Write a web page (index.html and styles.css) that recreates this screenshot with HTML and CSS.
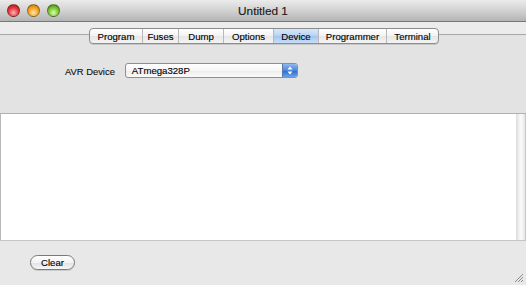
FILE: index.html
```html
<!DOCTYPE html>
<html>
<head>
<meta charset="utf-8">
<link rel="stylesheet" href="styles.css">
</head>
<body>
<div class="window">
  <div class="titlebar">
    <div class="lights">
      <span class="light red"></span>
      <span class="light yellow"></span>
      <span class="light green"></span>
    </div>
    <div class="title">Untitled 1</div>
    <div></div>
  </div>
  <div class="tabarea">
    <div class="tabline"></div>
    <div class="tabs">
      <span class="tab first">Program</span>
      <span class="tab">Fuses</span>
      <span class="tab">Dump</span>
      <span class="tab">Options</span>
      <span class="tab selected">Device</span>
      <span class="tab">Programmer</span>
      <span class="tab last">Terminal</span>
    </div>
  </div>
  <div class="panel">
    <span class="label">AVR Device</span>
    <div class="popup">
      <span class="popup-text">ATmega328P</span>
      <span class="stepper">
        <svg width="6" height="9" viewBox="0 0 6 9"><path d="M3 0.5 L5.5 3.5 L0.5 3.5 Z M3 8.5 L5.5 5.5 L0.5 5.5 Z" fill="#fff"/></svg>
      </span>
    </div>
  </div>
  <div class="output">
    <div class="text"></div>
    <div class="scrolltrack"></div>
  </div>
  <div class="footer">
    <span class="button">Clear</span>
  </div>
  <svg class="grip" width="10" height="10" viewBox="0 0 10 10">
    <path d="M9 1 L1 9 M9 4 L4 9 M9 7 L7 9" stroke="#8a8a8a" stroke-width="1"/>
  </svg>
</div>
</body>
</html>
```
FILE: styles.css
```css
html, body {
  margin: 0;
  padding: 0;
}
body {
  width: 526px;
  height: 285px;
  overflow: hidden;
  font-family: "Liberation Sans", Arial, sans-serif;
}
.window {
  position: relative;
  width: 526px;
  height: 285px;
  display: flex;
  flex-direction: column;
  background: #e8e8e8;
}
.titlebar {
  height: 21px;
  border-bottom: 1px solid #777;
  background: linear-gradient(#ebebeb, #d2d2d2 50%, #b4b4b4);
  display: grid;
  grid-template-columns: 1fr auto 1fr;
  align-items: center;
}
.lights {
  display: flex;
  gap: 7px;
  padding-left: 7px;
  align-items: center;
}
.light {
  width: 13px;
  height: 13px;
  border-radius: 50%;
  box-sizing: border-box;
  border: 1px solid rgba(0,0,0,0.35);
}
.red { background: radial-gradient(circle at 50% 70%, #ffb0b0, #e0333a 55%, #a81a20); }
.yellow { background: radial-gradient(circle at 50% 70%, #ffe6a0, #f0a020 55%, #b46a08); }
.green { background: radial-gradient(circle at 50% 70%, #d8ffb0, #78c030 55%, #3e8010); }
.title {
  font-size: 11.8px;
  color: #1a1a1a;
  -webkit-text-stroke: 0.15px #1a1a1a;
  padding-top: 1px;
}
.tabarea {
  height: 21px;
  display: flex;
  justify-content: center;
  align-items: flex-start;
  background: linear-gradient(#ececec 0, #ececec 13px, #e3e3e3 13px);
  position: relative;
}
.tabline {
  position: absolute;
  left: 0;
  right: 0;
  top: 12px;
  height: 1px;
  background: #a8a8a8;
}
.tabs {
  margin-top: 6px;
  margin-left: 2px;
  display: flex;
  height: 14px;
  border: 1px solid #8c8c8c;
  border-radius: 4px;
  background: linear-gradient(#ffffff, #f2f2f2 50%, #e6e6e6 51%, #f4f4f4);
  position: relative;
  box-shadow: 0 1px 0 rgba(0,0,0,0.12);
  overflow: hidden;
}
.tab {
  display: flex;
  align-items: center;
  justify-content: center;
  font-size: 9.6px;
  color: #000;
  -webkit-text-stroke: 0.12px #000;
  border-left: 1px solid #b8b8b8;
  box-sizing: border-box;
}
.tab.first { border-left: none; width: 52px; }
.tab:nth-child(2) { width: 36px; }
.tab:nth-child(3) { width: 45px; }
.tab:nth-child(4) { width: 50px; }
.tab:nth-child(5) { width: 45px; }
.tab:nth-child(6) { width: 68px; }
.tab.last { width: 52px; }
.tab.selected {
  background: linear-gradient(#d8e8fa, #b8d2f2 50%, #a4c4ee 51%, #c8def8);
}
.panel {
  height: 70px;
  background: #e3e3e3;
  display: flex;
  align-items: flex-start;
  padding-top: 20px;
  padding-left: 65px;
  box-sizing: border-box;
  gap: 10px;
}
.label {
  font-size: 9.4px;
  margin-top: 3px;
  color: #111;
  -webkit-text-stroke: 0.12px #111;
}
.popup {
  width: 173px;
  height: 15px;
  box-sizing: border-box;
  border: 1px solid #8e8e8e;
  border-radius: 3px;
  background: linear-gradient(#ffffff, #f6f6f6 50%, #ececec 51%, #fafafa);
  display: flex;
  align-items: center;
  overflow: hidden;
}
.popup-text {
  flex: 1;
  font-size: 9.6px;
  padding-left: 6px;
  color: #000;
  -webkit-text-stroke: 0.12px #000;
}
.stepper {
  width: 14px;
  height: 13px;
  border-left: 1px solid #5a7aa8;
  background: linear-gradient(#8fb8ee, #4a86dc 50%, #2a68c8 51%, #6aa4ec);
  display: flex;
  align-items: center;
  justify-content: center;
}
.output {
  height: 128px;
  border-top: 1px solid #b0b0b0;
  border-bottom: 1px solid #c4c4c4;
  display: flex;
  box-sizing: border-box;
  background: #fff;
}
.text {
  flex: 1;
  border-left: 1px solid #b8b8b8;
  background: #fff;
}
.scrolltrack {
  width: 9px;
  border-right: 1px solid #c8c8c8;
  background: linear-gradient(90deg, #dcdcdc, #f4f4f4 40%, #fafafa 60%, #e4e4e4);
}
.footer {
  flex: 1;
  background: #e8e8e8;
  padding-left: 30px;
  padding-top: 14px;
  box-sizing: border-box;
  display: flex;
  align-items: flex-start;
}
.button {
  display: flex;
  align-items: center;
  justify-content: center;
  width: 45px;
  height: 15px;
  box-sizing: border-box;
  border: 1px solid #7a7a7a;
  border-radius: 8px;
  background: linear-gradient(#ffffff, #f2f2f2 50%, #e2e2e2 51%, #f6f6f6);
  font-size: 9.6px;
  color: #000;
  -webkit-text-stroke: 0.12px #000;
  box-shadow: 0 1px 0 rgba(0,0,0,0.12);
}
.grip {
  position: absolute;
  right: 2px;
  bottom: 2px;
}
```
